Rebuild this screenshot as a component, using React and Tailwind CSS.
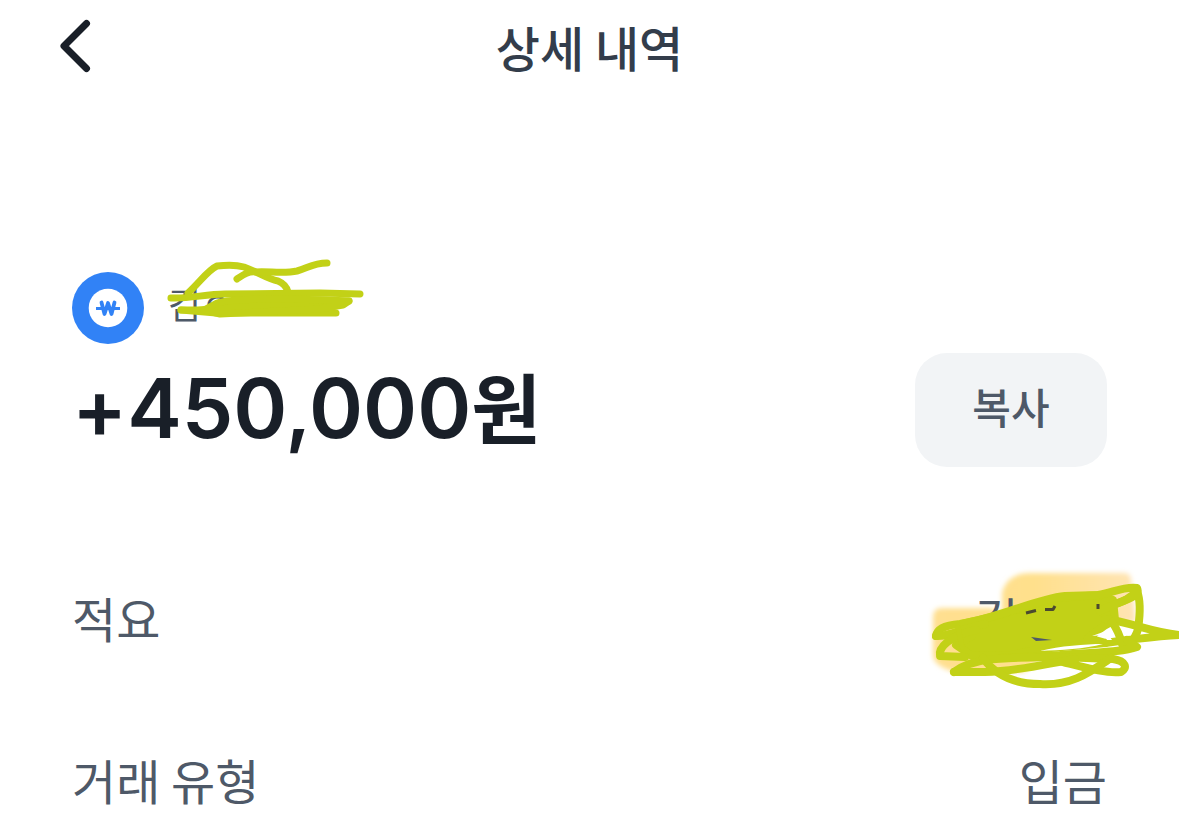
const KR = "font-['Noto_Sans_CJK_KR',sans-serif]";

function BackIcon() {
  return (
    <svg width="32" height="54" viewBox="0 0 32 54" fill="none" aria-hidden="true">
      <path
        d="M27.5 4.5L5 27L27.5 49.5"
        stroke="#191f28"
        strokeWidth="7"
        strokeLinecap="round"
        strokeLinejoin="round"
      />
    </svg>
  );
}

function WonIcon() {
  return (
    <svg width="72" height="72" viewBox="0 0 72 72" fill="none" aria-hidden="true">
      <circle cx="36" cy="36" r="36" fill="#3182f6" />
      <circle cx="36" cy="36" r="19.3" fill="#fff" />
      <path
        d="M29.5 30.5L32.5 42L36 31L39.5 42L42.5 30.5"
        stroke="#3182f6"
        strokeWidth="3.8"
        strokeLinecap="round"
        strokeLinejoin="round"
      />
      <path d="M24 36.5H31M41 36.5H48" stroke="#3182f6" strokeWidth="3" />
    </svg>
  );
}

// marker strokes over the sender name
function NameScribble() {
  return (
    <svg
      className="absolute -left-[4px] -top-[20px] pointer-events-none"
      width="200"
      height="64"
      viewBox="164 256 200 64"
      fill="none"
      stroke="#c2d117"
      strokeWidth="7"
      strokeLinecap="round"
      strokeLinejoin="round"
      aria-hidden="true"
    >
      <path d="M188 293C200 282 208 270 217 266C226 265 237 265 244 267C258 272 267 279 278 281C285 284 287 288 288 292" />
      <path d="M237 279C243 275 248 271 256 272C268 271 284 274 297 271C308 268 313 263 327 263" />
      <path d="M171 298C190 299 205 294 225 294L320 293L360 294" />
      <path d="M181 310H198C220 309 230 302 349 301" />
      <path d="M181 310L216 313L336 313" />
      <path
        d="M217 303C235 298 280 298 349 301L343 305L320 309L220 314L204 310Z"
        fill="#c2d117"
      />
    </svg>
  );
}

// marker strokes over the memo value
function MemoScribble() {
  return (
    <svg
      className="absolute -right-[72px] -top-[17px] pointer-events-none"
      width="259"
      height="130"
      viewBox="920 564 259 130"
      fill="none"
      stroke="#c2d117"
      strokeWidth="8"
      strokeLinecap="round"
      strokeLinejoin="round"
      aria-hidden="true"
    >
      <path
        d="M962 624L992 617L1056 598L1100 595L1113 600L1115 620L1104 626L1088 638L1106 643L1040 649L1012 655L972 656L956 645L972 636Z"
        fill="#c2d117"
      />
      <path d="M936 636C937 628 947 625 960 624C1000 618 1035 599 1065 596L1098 595C1112 593 1124 586 1137 588C1140 594 1132 598 1118 603" />
      <path d="M936 636C950 637 962 628 985 624" />
      <path d="M965 657L940 656C938 648 950 635 976 630" />
      <path d="M958 627L962 647" strokeWidth="5" />
      <path d="M1100 611C1115 603 1127 602 1137 591C1142 604 1139 622 1138 629C1137 634 1133 640 1129 645" />
      <path d="M1105 619C1130 622 1150 632 1179 635C1160 636 1145 638 1127 640L1105 643" />
      <path d="M1112 622C1117 629 1120 636 1122 644" />
      <path d="M1127 640L1137 647C1120 653 1090 652 1060 655C1040 656 1025 657 1000 658" />
      <path d="M954 672C963 665 972 663 985 660C1015 656 1075 657 1113 659C1126 661 1128 668 1121 672C1105 674 1080 666 1055 660" />
      <path d="M954 672H985C1020 671 1045 664 1075 659" />
      <path d="M983 658C995 675 1015 684 1040 684C1072 686 1090 672 1111 658" />
      {/* paper and text left uncovered between the strokes */}
      <path d="M1040 651C1060 646 1085 644 1103 644C1085 649 1060 650 1040 651Z" fill="#fff" stroke="none" />
      <path d="M1092 636L1106 631L1112 640H1107L1104 635Z" fill="#fff" stroke="none" />
      <path d="M1026 613L1036 610.5M1045 609.5H1053L1055 606M1098 604V609" stroke="#4b4a30" strokeWidth="3" strokeLinecap="butt" />
      <path d="M1031 637L1052 640L1036 641Z" fill="#4e5968" stroke="none" />
    </svg>
  );
}

// soft highlighter patch behind the memo value
function Highlight() {
  return (
    <svg
      className="absolute -right-[72px] -top-[17px] pointer-events-none"
      width="259"
      height="130"
      viewBox="920 564 259 130"
      aria-hidden="true"
    >
      <defs>
        <linearGradient id="marker" x1="0" y1="0" x2="1" y2="0">
          <stop offset="0" stopColor="#ffdf90" />
          <stop offset="0.5" stopColor="#ffe08c" />
          <stop offset="1" stopColor="#ffe4b4" />
        </linearGradient>
        <filter id="soft" x="-10%" y="-10%" width="120%" height="120%">
          <feGaussianBlur stdDeviation="2.5" />
        </filter>
      </defs>
      <path
        d="M942 608H990L1002 612V592Q1008 573 1030 573H1124Q1131 573 1131 580L1136 622H1080L1024 672H955Q933 666 933 655V617Q933 608 942 608Z"
        fill="url(#marker)"
        filter="url(#soft)"
      />
    </svg>
  );
}

function Row({ label, children }) {
  return (
    <div className="flex items-center justify-between text-[48px] leading-[72px] text-[#4e5968]">
      <dt>{label}</dt>
      <dd className="relative">{children}</dd>
    </div>
  );
}

export default function App() {
  return (
    <div className={`${KR} overflow-x-hidden bg-white`}>
      {/* Header */}
      <header className="grid grid-cols-[1fr_auto_1fr] items-center px-[59px] pt-[10px]">
        <button type="button" aria-label="뒤로" className="justify-self-start">
          <BackIcon />
        </button>
        <h1 className="text-[48px] leading-[72px] font-medium text-[#333d4b]">상세 내역</h1>
      </header>

      <main className="px-[72px] pt-[190px]">
        {/* Sender */}
        <div className="flex items-center gap-6">
          <WonIcon />
          <div className="relative h-[64px] text-[36px] leading-[54px] text-[#4e5968]">
            <span>김ㅇㅇ</span>
            <NameScribble />
          </div>
        </div>

        {/* Amount */}
        <div className="mt-2 flex items-center justify-between">
          <p className="font-['Inter','Noto_Sans_CJK_KR',sans-serif] text-[82px] leading-[114px] font-semibold text-[#191f28]">
            +450,000<span className="text-[76px]">원</span>
          </p>
          <button
            type="button"
            className="h-[114px] w-[192px] rounded-[32px] bg-[#f2f4f6] pb-2 text-[42px] font-medium text-[#4e5968]"
          >
            복사
          </button>
        </div>

        {/* Details */}
        <dl className="mt-[114px] flex flex-col gap-[90px]">
          <Row label="적요">
            <Highlight />
            <span className="relative">김ㅇㅇ</span>
            <MemoScribble />
          </Row>
          <Row label="거래 유형">입금</Row>
        </dl>
      </main>
    </div>
  );
}
